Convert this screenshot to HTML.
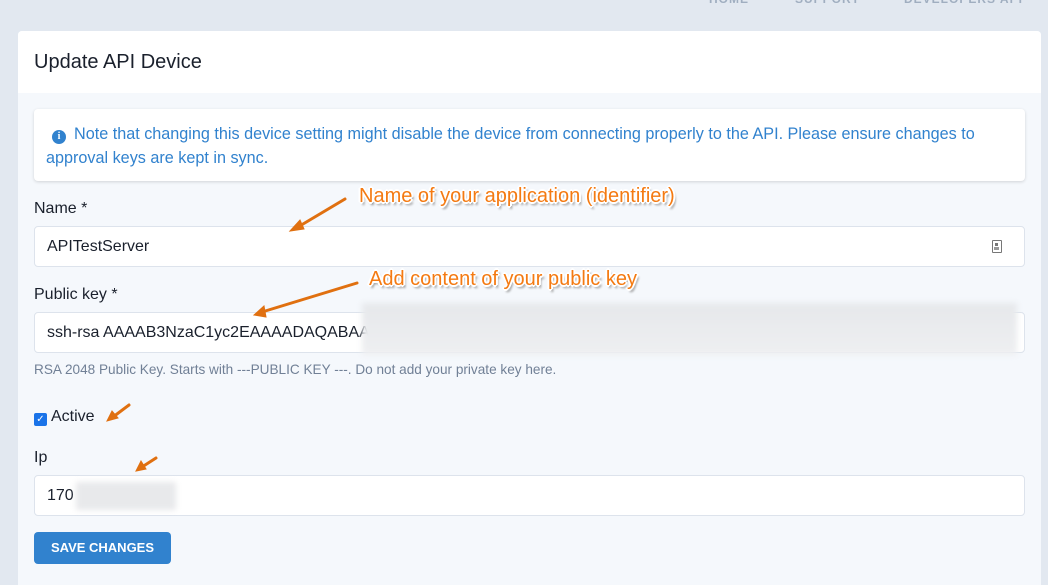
<!DOCTYPE html>
<html><head><meta charset="utf-8"><style>
*{box-sizing:border-box;margin:0;padding:0}
html,body{width:1048px;height:585px;overflow:hidden}
body{background:#e2e8f0;font-family:"Liberation Sans",sans-serif;position:relative;color:#1a202c}
.nav{position:absolute;top:-8px;font-size:12px;color:#a0aec0;font-weight:bold;letter-spacing:1px}
.card{position:absolute;left:18px;top:31px;width:1023px;height:560px;background:#f5f8fc;border-radius:4px;overflow:hidden}
.hdr{height:62px;background:#fff;padding:20px 16px;font-size:20px;color:#1a202c}
.alert{position:absolute;left:16px;top:78px;width:991px;height:72px;background:#fff;border-radius:4px;box-shadow:0 1px 3px rgba(0,0,0,.15);padding:13px 20px 12px 12px;color:#3182ce;font-size:16.2px;line-height:24px}
.ico{display:inline-block;width:14px;height:14px;border-radius:50%;background:#3182ce;color:#fff;font-size:10px;font-weight:bold;text-align:center;line-height:14px;font-family:"Liberation Serif",serif;margin:0 8px 0 6px;vertical-align:0}
.lbl{position:absolute;left:16px;font-size:16px;color:#1a202c}
.inp{position:absolute;left:16px;width:991px;height:41px;background:#fff;border:1px solid #dde3ec;border-radius:4px;padding:0 12px;font-size:16px;line-height:39px;color:#1a202c;overflow:hidden;white-space:nowrap}
.help{position:absolute;left:16px;top:331px;font-size:13.6px;color:#718096}
.btn{position:absolute;left:16px;top:501px;width:137px;height:32px;background:#3182ce;border-radius:4px;color:#fff;font-weight:bold;font-size:13px;text-align:center;line-height:32px}
.ann{position:absolute;font-size:20px;color:#f47a12;white-space:nowrap;text-shadow:-2px 0 #fff,2px 0 #fff,0 -2px #fff,0 2px #fff,-1px -1px #fff,1px 1px #fff,-1px 1px #fff,1px -1px #fff,2px 3px 2px #888}
.blur{position:absolute;filter:blur(3px);background:linear-gradient(#e6e8eb,#eeeff1);}
</style></head><body>
<div class="nav" style="left:709px">HOME</div>
<div class="nav" style="left:795px">SUPPORT</div>
<div class="nav" style="left:904px">DEVELOPERS API</div>
<div class="card">
<div class="hdr">Update API Device</div>
<div class="alert"><span class="ico">i</span>Note that changing this device setting might disable the device from connecting properly to the API. Please ensure changes to approval keys are kept in sync.</div>
<div class="lbl" style="top:169px">Name *</div>
<div class="inp" style="top:195px">APITestServer<span style="position:absolute;right:22px;top:13px;width:10px;height:13px;border:1.5px solid #777;border-radius:1px;background:#fff"><span style="position:absolute;left:2px;top:2px;width:3px;height:3px;background:#777"></span><span style="position:absolute;left:1px;top:6px;width:5px;height:3px;background:#999"></span></span></div>
<div class="lbl" style="top:255px">Public key *</div>
<div class="inp" style="top:281px">ssh-rsa AAAAB3NzaC1yc2EAAAADAQABAA</div>
<div class="blur" style="left:344px;top:272px;width:655px;height:52px"></div>
<div class="help">RSA 2048 Public Key. Starts with ---PUBLIC KEY ---. Do not add your private key here.</div>
<div class="lbl" style="top:377px;font-size:16px"><span style="display:inline-block;width:13px;height:13px;background:#1a73e8;border-radius:2px;color:#fff;font-size:10px;line-height:13px;text-align:center;vertical-align:-1px;margin-right:4px">✓</span>Active</div>
<div class="lbl" style="top:418px;font-size:16px">Ip</div>
<div class="inp" style="top:444px">170</div>
<div class="blur" style="left:58px;top:451px;width:100px;height:28px;background:#e8e9eb"></div>
<div class="btn">SAVE CHANGES</div>
</div>
<svg style="position:absolute;left:0;top:0" width="1048" height="585">
<g stroke="#e07010" stroke-width="3" fill="#e07010" stroke-linecap="round">
<line x1="345" y1="199" x2="298" y2="227"/><polygon points="290,231 300,220 304,229" stroke-width="1"/>
<line x1="357" y1="283" x2="262" y2="312"/><polygon points="254,315 264,306 266,317" stroke-width="1"/>
<line x1="129" y1="405" x2="113" y2="417"/><polygon points="107,421 112,411 118,418" stroke-width="1"/>
<line x1="156" y1="458" x2="142" y2="467"/><polygon points="136,471 141,461 146,469" stroke-width="1"/>
</g></svg>
<div class="ann" style="left:359px;top:185px">Name of your application (identifier)</div>
<div class="ann" style="left:369px;top:268px">Add content of your public key</div>
</body></html>
